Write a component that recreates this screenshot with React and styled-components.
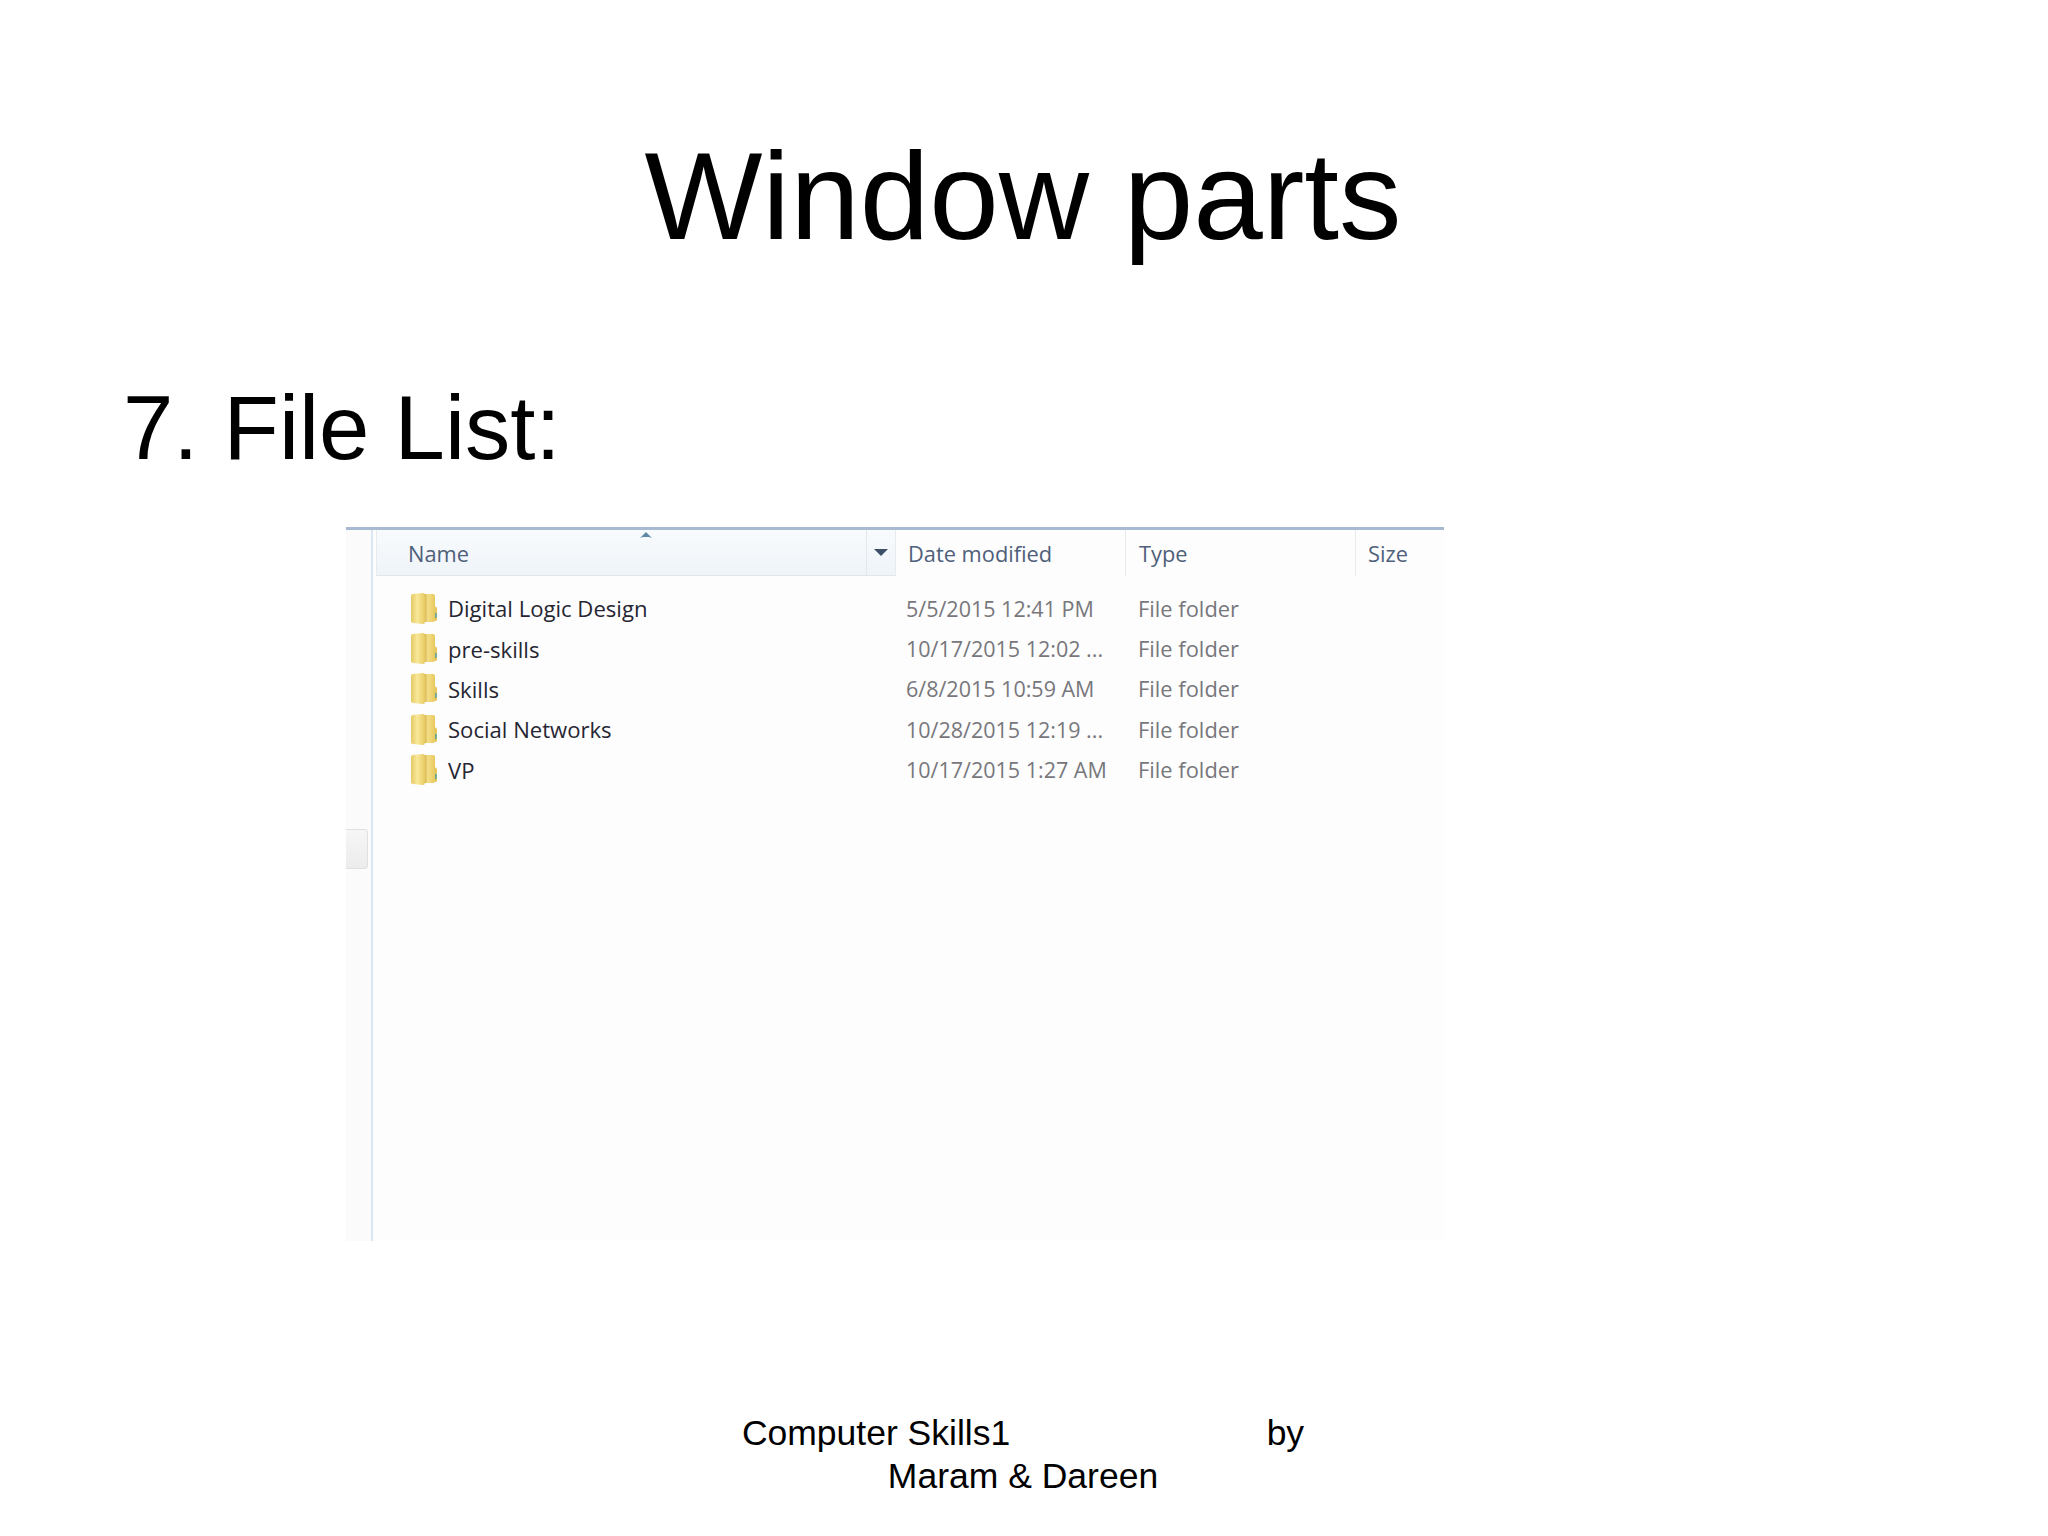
import React from 'react';
import styled, { createGlobalStyle } from 'styled-components';

const GlobalStyle = createGlobalStyle`
  html, body { margin: 0; padding: 0; background: #fff; }
  body { font-family: "Liberation Sans", Arial, sans-serif; color: #000; }
`;

const Slide = styled.div`
  width: 2048px;
  height: 1536px;
  display: flex;
  flex-direction: column;
  overflow: hidden;
`;

const Title = styled.h1`
  margin: 126px 0 0;
  padding-right: 2px;
  height: 140px;
  font-size: 125px;
  line-height: 140px;
  font-weight: 400;
  text-align: center;
`;

const Heading = styled.h2`
  margin: 112px 0 0 123px;
  height: 100px;
  font-size: 90.5px;
  line-height: 100px;
  font-weight: 400;
`;

const Explorer = styled.div`
  margin: 49px 0 0 346px;
  width: 1098px;
  height: 711px;
  display: flex;
  border-top: 3px solid #a8b9d2;
  background: #fdfdfd;
`;

const Rail = styled.div`
  width: 25px;
  border-right: 2px solid #d9e7f5;
  background: #fbfbfb;
  display: flex;
  align-items: flex-start;
  padding-top: 299px;
`;

const Grip = styled.div`
  width: 21px;
  height: 38px;
  background: linear-gradient(#f6f6f6, #ececec);
  border: 1px solid #e0e0e0;
  border-left: none;
  border-radius: 0 4px 4px 0;
`;

const ListPane = styled.div`
  flex: 1;
  display: flex;
  flex-direction: column;
`;

const Header = styled.div`
  height: 46px;
  margin-left: 3px;
  display: grid;
  grid-template-columns: 520px 230px 230px 1fr;
`;

const HeaderCell = styled.div`
  position: relative;
  display: flex;
  align-items: center;
  padding: 2px 0 0 ${(p) => p.$pad}px;
  font-family: "Open Sans", "Noto Sans", sans-serif;
  font-size: 21.8px;
  color: #4f607a;
  background: ${(p) => (p.$active ? 'linear-gradient(#f8fbfd, #eff4f9)' : 'transparent')};
  border-right: 1px solid ${(p) => (p.$last ? 'transparent' : '#e6ebf0')};
  border-bottom: 1px solid ${(p) => (p.$active ? '#e0e6ec' : 'transparent')};
  border-left: 1px solid ${(p) => (p.$active ? '#e6ebf0' : 'transparent')};
`;

const SortArrow = styled.svg`
  position: absolute;
  left: 262px;
  top: 1px;
`;

const DropZone = styled.div`
  position: absolute;
  right: 0;
  top: 0;
  bottom: 0;
  width: 28px;
  border-left: 1px solid #e2e8ee;
  display: flex;
  align-items: center;
  justify-content: center;
`;

const Rows = styled.div`
  padding-top: 12px;
  display: flex;
  flex-direction: column;
`;

const Row = styled.div`
  height: 40.4px;
  display: grid;
  grid-template-columns: 523px 230px 230px 1fr;
  align-items: center;
  font-family: "Open Sans", "Noto Sans", sans-serif;
`;

const NameCell = styled.div`
  display: flex;
  align-items: center;
  gap: 11px;
  padding-left: 38px;
  color: #262633;
  font-size: 22.1px;
`;

const InfoCell = styled.div`
  padding-left: ${(p) => p.$pad}px;
  color: #77777c;
  font-size: ${(p) => p.$size}px;
  white-space: nowrap;
`;

const FolderIcon = () => (
  <svg width="26" height="31" viewBox="0 0 26 31">
    <defs>
      <linearGradient id="leaf" x1="0" y1="0" x2="1" y2="0">
        <stop offset="0" stopColor="#e6c965" />
        <stop offset="0.45" stopColor="#f8e898" />
        <stop offset="1" stopColor="#e8ca62" />
      </linearGradient>
      <linearGradient id="back" x1="0" y1="0" x2="1" y2="0">
        <stop offset="0" stopColor="#cfa948" />
        <stop offset="0.35" stopColor="#f3de86" />
        <stop offset="1" stopColor="#e8c95f" />
      </linearGradient>
    </defs>
    <path d="M13 1 H22 Q24 1 24 3 V27 Q24 29 22 29 H13 Z" fill="url(#back)" />
    <path d="M24 13 L26 15 V27 Q26 28 24 28 Z" fill="#e4c45c" />
    <rect x="24" y="20" width="1.6" height="5" fill="#5fa8a0" />
    <path d="M0 3 Q0 1 2 1 L12 0 Q14 0 14 2 V29 Q14 31 12 31 L2 30 Q0 30 0 28 Z" fill="url(#leaf)" />
  </svg>
);

const files = [
  ['Digital Logic Design', '5/5/2015 12:41 PM'],
  ['pre-skills', '10/17/2015 12:02 ...'],
  ['Skills', '6/8/2015 10:59 AM'],
  ['Social Networks', '10/28/2015 12:19 ...'],
  ['VP', '10/17/2015 1:27 AM'],
];

const Footer = styled.footer`
  margin-top: 171px;
  padding-right: 2px;
  font-size: 35.5px;
  line-height: 43px;
  text-align: center;
`;

const FooterLine = styled.div`
  white-space: pre;
`;

export default function App() {
  return (
    <Slide>
      <GlobalStyle />
      <Title>Window parts</Title>
      <Heading>7. File List:</Heading>
      <Explorer>
        <Rail>
          <Grip />
        </Rail>
        <ListPane>
          <Header>
            <HeaderCell $pad={31} $active>
              Name
              <SortArrow width="14" height="8" viewBox="0 0 14 8">
                <path d="M1 7 L7 1 L13 7 L10 6 H4 Z" fill="#5f8aa6" />
              </SortArrow>
              <DropZone>
                <svg width="14" height="7" viewBox="0 0 14 7">
                  <path d="M0 0 H14 L7 7 Z" fill="#3e4f68" />
                </svg>
              </DropZone>
            </HeaderCell>
            <HeaderCell $pad={11}>Date modified</HeaderCell>
            <HeaderCell $pad={12}>Type</HeaderCell>
            <HeaderCell $pad={11} $last>Size</HeaderCell>
          </Header>
          <Rows>
            {files.map(([name, date]) => (
              <Row key={name}>
                <NameCell>
                  <FolderIcon />
                  {name}
                </NameCell>
                <InfoCell $pad={10} $size={21.5}>{date}</InfoCell>
                <InfoCell $pad={12} $size={21.9}>File folder</InfoCell>
                <InfoCell />
              </Row>
            ))}
          </Rows>
        </ListPane>
      </Explorer>
      <Footer>
        <FooterLine>{'Computer Skills1                          by'}</FooterLine>
        <FooterLine>{'Maram & Dareen'}</FooterLine>
      </Footer>
    </Slide>
  );
}
